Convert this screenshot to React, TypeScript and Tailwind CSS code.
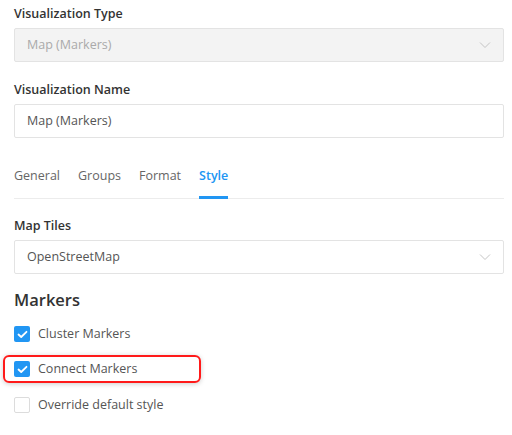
import React from "react";

const Chevron = () => (
  <svg width="12" height="8" viewBox="0 0 12 8" className="shrink-0">
    <path d="M1 1.5 L6 6.5 L11 1.5" fill="none" stroke="#c4c4c4" strokeWidth="1" />
  </svg>
);

const Check = ({ checked }: { checked: boolean }) =>
  checked ? (
    <div className="w-4 h-4 rounded-[2px] bg-[#2196f3] flex items-center justify-center shrink-0">
      <svg width="11" height="9" viewBox="0 0 11 9">
        <path d="M1.5 4.5 L4.2 7 L9.5 1.8" fill="none" stroke="white" strokeWidth="1.8" strokeLinecap="round" strokeLinejoin="round" />
      </svg>
    </div>
  ) : (
    <div className="w-4 h-4 rounded-[2px] border border-[#dcdcdc] bg-white shrink-0" />
  );

export default function App() {
  return (
    <div
      className="w-[512px] h-[435px] bg-white px-[14px] pr-[8px] text-[12.5px] text-[#333]"
      style={{ fontFamily: '"Open Sans", "Noto Sans", sans-serif' }}
    >
      <div className="pt-[4px] font-[560] text-[#333] leading-[20px]">Visualization Type</div>
      <div className="mt-[4px] h-[34px] border border-[#e3e3e3] bg-[#f3f3f3] rounded-[2px] flex items-center justify-between pl-[12px] pr-[12px] text-[#aaa]">
        <span>Map (Markers)</span>
        <Chevron />
      </div>
      <div className="mt-[18px] font-[560] text-[#333] leading-[20px]">Visualization Name</div>
      <div className="mt-[4px] h-[34px] border border-[#e3e3e3] bg-white rounded-[2px] flex items-center pl-[12px] text-[#555]">
        Map (Markers)
      </div>
      <div className="mt-[25px] flex border-b border-[#ececec] h-[36px] pt-[3px] text-[#666]">
        <div className="mr-[18px] leading-[20px]">General</div>
        <div className="mr-[18px] leading-[20px]">Groups</div>
        <div className="mr-[18px] leading-[20px]">Format</div>
        <div className="relative leading-[20px] font-semibold text-[#2196f3]">
          Style
          <div className="absolute left-0 right-0 -bottom-[1px] h-[3px] bg-[#2196f3]" />
        </div>
      </div>
      <div className="mt-[17px] font-[560] text-[#333] leading-[20px]">Map Tiles</div>
      <div className="mt-[4px] h-[34px] border border-[#e3e3e3] bg-white rounded-[2px] flex items-center justify-between pl-[12px] pr-[12px] text-[#555]">
        <span>OpenStreetMap</span>
        <Chevron />
      </div>
      <div className="mt-[15px] text-[16.5px] font-semibold text-[#333] leading-[22px]">Markers</div>
      <div className="mt-[15px] flex flex-col">
        <div className="h-[16px] flex items-center gap-[8px] text-[#555]">
          <Check checked />
          <span>Cluster Markers</span>
        </div>
        <div className="relative mt-[19px] h-[16px] flex items-center gap-[8px] text-[#555]">
          <div className="absolute -left-[11px] -top-[6px] w-[198px] h-[28px] border-2 border-[#ff1a1a] rounded-[6px] shadow-[0_1px_5px_rgba(0,0,0,0.2)]" />
          <Check checked />
          <span>Connect Markers</span>
        </div>
        <div className="mt-[20px] h-[16px] flex items-center gap-[8px] text-[#555]">
          <Check checked={false} />
          <span>Override default style</span>
        </div>
      </div>
    </div>
  );
}
